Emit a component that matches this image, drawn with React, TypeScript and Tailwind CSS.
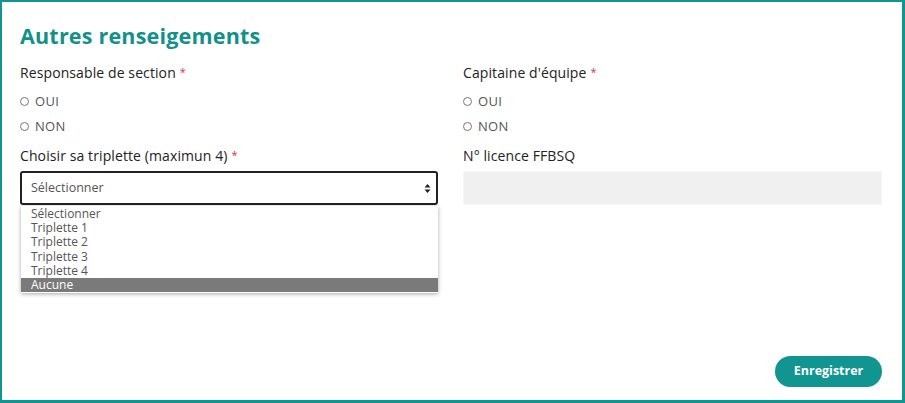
import React from "react";

const Radio = ({ label }: { label: string }) => (
  <div className="flex items-center h-[25px] gap-[6px]">
    <span className="w-[9px] h-[9px] rounded-full border border-[#777] bg-white" />
    <span className="text-[13px] text-[#555] tracking-[0.3px]">{label}</span>
  </div>
);

const Label = ({ text, req }: { text: string; req?: boolean }) => (
  <div className="h-[20px] flex items-center text-[14px] text-[#222] tracking-[0.1px]">
    {text}
    {req && <span className="text-[#e0303a] ml-[4px] text-[11px] self-start mt-[2px]">*</span>}
  </div>
);

export default function App() {
  const items = ["Sélectionner", "Triplette 1", "Triplette 2", "Triplette 3", "Triplette 4", "Aucune"];
  return (
    <div
      className="w-[905px] h-[403px] bg-white border-[#11958f] border-t-2 border-l-2 border-r-[3px] border-b-[3px] flex flex-col pl-[18px] pr-[20px] pt-[19px]"
      style={{ fontFamily: '"Open Sans", Lato, sans-serif' }}
    >
      <h1 className="text-[21.5px] font-bold text-[#12908a] leading-[30px] h-[30px] tracking-[0.2px]">Autres renseigements</h1>
      <div className="grid grid-cols-[418px_419px] gap-x-[25px] mt-[11px]">
        <div className="flex flex-col">
          <Label text="Responsable de section" req />
          <div className="mt-[7px]">
            <Radio label="OUI" />
            <Radio label="NON" />
          </div>
        </div>
        <div className="flex flex-col">
          <Label text="Capitaine d'équipe" req />
          <div className="mt-[7px]">
            <Radio label="OUI" />
            <Radio label="NON" />
          </div>
        </div>
        <div className="flex flex-col mt-[6px]">
          <Label text="Choisir sa triplette (maximun 4)" req />
          <div className="relative mt-[6px]">
            <div className="h-[34px] border-2 border-[#222] rounded-[3px] flex items-center justify-between pl-[9px] pr-[5px]">
              <span className="text-[12.5px] text-[#555]">Sélectionner</span>
              <svg width="7" height="11" viewBox="0 0 7 11">
                <path d="M3.5 1 L6.5 4.5 L0.5 4.5 Z" fill="#222" />
                <path d="M3.5 10 L6.5 6.5 L0.5 6.5 Z" fill="#222" />
              </svg>
            </div>
            <div className="absolute left-[1px] right-0 top-[35px] bg-white shadow-[0_1px_4px_rgba(0,0,0,0.35)] pt-[1px] pb-[1px]">
              {items.map((it) => (
                <div
                  key={it}
                  className={
                    "h-[14.2px] leading-[14.2px] pl-[10px] text-[12px] " +
                    (it === "Aucune" ? "bg-[#7a7a7a] text-white" : "text-[#555]")
                  }
                >
                  {it}
                </div>
              ))}
            </div>
          </div>
        </div>
        <div className="flex flex-col mt-[6px]">
          <Label text="N° licence FFBSQ" />
          <div className="mt-[6px] h-[34px] bg-[#f0f0f0] border border-[#f6f6f6]" />
        </div>
      </div>
      <div className="flex-1" />
      <div className="flex justify-end mb-[13px]">
        <button className="w-[107px] h-[31px] rounded-full bg-[#119590] text-white font-bold text-[12.5px]">
          Enregistrer
        </button>
      </div>
    </div>
  );
}
